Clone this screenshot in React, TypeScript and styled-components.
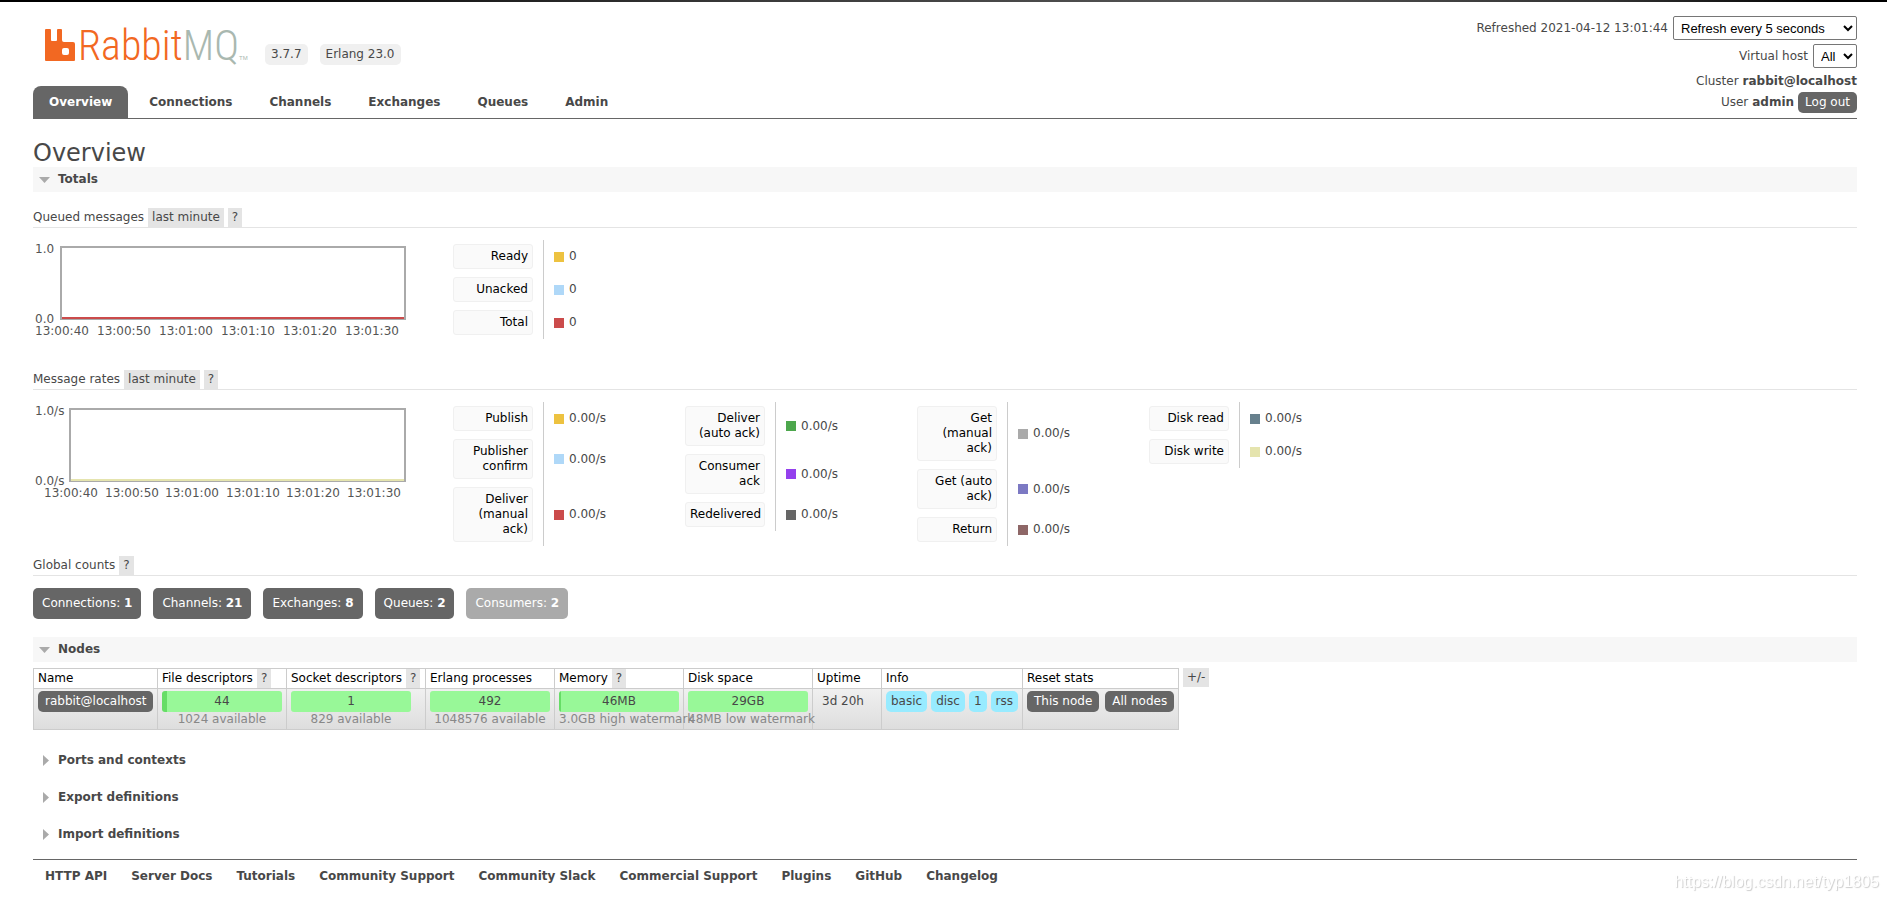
import React, { useState } from "react";
import styled, { createGlobalStyle, css } from "styled-components";

const GlobalStyle = createGlobalStyle`
  * { box-sizing: border-box; }
  body {
    margin: 0;
    background: #fff;
    color: #484848;
    font: 12px/15px Verdana, "DejaVu Sans", sans-serif;
  }
  button, input { font: inherit; }
  a { color: inherit; text-decoration: none; }
`;

const TopEdge = styled.div`
  height: 2px;
  background: linear-gradient(to right, #000 10%, #3a3a3a 40%, #555 65%, #333 85%, #000 97%);
`;

const Page = styled.div`
  padding: 0 30px 0 33px;
`;

const Header = styled.header`
  display: flex;
  justify-content: space-between;
  border-bottom: 1px solid #666;
`;

const Brand = styled.div`
  display: flex;
  flex-direction: column;
  justify-content: space-between;
  padding-top: 26px;
`;

const LogoRow = styled.div`
  display: flex;
  align-items: flex-start;
  gap: 12px;
  padding-left: 12px;
`;

const LogoLink = styled.a`
  display: block;
  width: 208px;
  height: 36px;
  svg { display: block; overflow: visible; }
`;

const VersionTag = styled.span`
  margin-top: 16px;
  padding: 3px 6px;
  border-radius: 5px;
  background: #f0f0f0;
`;

const TabList = styled.ul`
  display: flex;
  gap: 5px;
  margin: 0;
  padding: 0;
  list-style: none;
`;

const Tab = styled.a<{ $active?: boolean }>`
  display: block;
  padding: 9px 16px 8px;
  border-radius: 8px 8px 0 0;
  font-weight: bold;
  ${(p) => p.$active && css`background: #666; color: #fff;`}
`;

const Session = styled.div`
  display: flex;
  flex-direction: column;
  align-items: flex-end;
  padding: 14px 0 3px;
`;

const SessionRow = styled.div<{ $height: number }>`
  display: flex;
  align-items: center;
  gap: 4px;
  height: ${(p) => p.$height}px;
  label { display: flex; align-items: center; gap: 5px; }
`;

const Select = styled.select<{ $width: number }>`
  width: ${(p) => p.$width}px;
  height: 24px;
  padding: 0 3px;
  border: 1px solid #767676;
  border-radius: 2px;
  background-color: #fff;
  color: #000;
  font: 13px Arial, "Liberation Sans", sans-serif;
`;

const DarkButton = styled.button`
  height: 21px;
  padding: 0 7px;
  border: 0;
  border-radius: 5px;
  background: #666;
  color: #fff;
  line-height: 21px;
  white-space: nowrap;
`;

const Title = styled.h1`
  margin: 0;
  padding-top: 20px;
  font-size: 24px;
  font-weight: normal;
  line-height: 28px;
`;

const Section = styled.section<{ $space?: number }>`
  margin-bottom: ${(p) => p.$space ?? 12}px;
`;

const SectionHeading = styled.h2<{ $open: boolean }>`
  margin: 0;
  background: ${(p) => (p.$open ? "#f7f7f7" : "transparent")};
  font-size: 12px;
`;

const SectionToggle = styled.button`
  display: flex;
  align-items: center;
  width: 100%;
  height: 25px;
  padding: 0;
  border: 0;
  background: none;
  color: inherit;
  font-weight: bold;
  text-align: left;
  svg { flex: none; width: 25px; height: 12px; }
`;

const SubHeading = styled.h3`
  display: flex;
  gap: 4px;
  margin: 0;
  border-bottom: 1px solid #e4e4e4;
  font-size: 12px;
  font-weight: normal;
  line-height: 19px;
`;

const Chip = styled.button`
  height: 19px;
  padding: 0 4px;
  border: 0;
  background: #e4e4e4;
  color: #484848;
  line-height: 19px;
`;

const TotalsBody = styled.div`
  padding-top: 16px;
`;

const ChartRow = styled.div`
  display: flex;
  gap: 40px;
  padding: 12px 0 10px;
`;

const Chart = styled.svg`
  flex: none;
  width: 380px;
  height: 120px;
  font-size: 12px;
  fill: #545454;
`;

const Legends = styled.div`
  display: flex;
  align-items: flex-start;
`;

const Legend = styled.table`
  width: 232px;
  border-spacing: 0;
  th, td { padding: 4px 0; vertical-align: middle; text-align: left; }
  th { width: 91px; padding-right: 10px; border-right: 1px solid #ccc; font-weight: normal; }
  td { padding-left: 10px; }
`;

const LegendLabel = styled.button`
  display: block;
  width: 80px;
  padding: 4px;
  border: 1px solid #f0f0f0;
  border-radius: 3px;
  background: #fafafa;
  color: #000;
  text-align: right;
`;

const LegendValue = styled.span<{ $color: string }>`
  display: flex;
  align-items: center;
  gap: 5px;
  &::before { content: ""; width: 10px; height: 10px; background: ${(p) => p.$color}; }
`;

const Counts = styled.div`
  display: flex;
  gap: 12px;
  padding-top: 12px;
`;

const Count = styled.a<{ $muted?: boolean }>`
  padding: 8px 9px;
  border-radius: 5px;
  background: ${(p) => (p.$muted ? "#aaa" : "#666")};
  color: #fff;
`;

const NodesRow = styled.div`
  display: flex;
  align-items: flex-start;
  gap: 4px;
  padding-top: 6px;
`;

const NodeTable = styled.table`
  width: 1146px;
  table-layout: fixed;
  border-collapse: collapse;
  th, td { border: 1px solid #ccc; text-align: left; vertical-align: top; white-space: nowrap; }
  th { padding: 0 4px; color: #000; font-weight: normal; line-height: 19px; }
  td { padding: 2px 4px; height: 41px; }
  tbody tr { background: linear-gradient(#f0f0f0, #ddd); }
`;

const HeadCell = styled.div`
  display: flex;
  gap: 4px;
`;

const Meter = styled.div<{ $used: number }>`
  width: 120px;
  border-radius: 3px;
  background: linear-gradient(#66dd66, #66dd66) 0 0 / ${(p) => p.$used}px 100% no-repeat #98f898;
  line-height: 21px;
  text-align: center;
`;

const MeterNote = styled.div`
  width: 120px;
  color: #888;
  text-align: center;
`;

const PlainCell = styled.div`
  padding-left: 5px;
  line-height: 21px;
`;

const CellItems = styled.div<{ $gap: number }>`
  display: flex;
  gap: ${(p) => p.$gap}px;
`;

const InfoTag = styled.abbr`
  padding: 0 5px;
  border-radius: 5px;
  background: #98ebff;
  line-height: 21px;
  text-decoration: none;
`;

const Footer = styled.footer`
  margin-top: 12px;
  border-top: 1px solid #666;
  ul {
    display: flex;
    flex-wrap: wrap;
    gap: 24px;
    margin: 0;
    padding: 9px 12px;
    list-style: none;
    font-weight: bold;
  }
`;

const Watermark = styled.div`
  position: fixed;
  right: 8px;
  bottom: 8px;
  color: #fff;
  font: 16px/20px "Liberation Sans", Arial, sans-serif;
  text-shadow: 1px 1px 1px #ccc;
`;

function Logo() {
  return (
    <svg width="208" height="36" role="img" aria-label="RabbitMQ">
      <path
        fill="#f26822"
        fillRule="evenodd"
        d="M1 1H5Q6 1 6 2V12Q6 13 7 13H11Q12 13 12 12V2Q12 1 13 1H16Q17 1 17 2V12Q17 14 19 14H28Q30 14 30 16V32Q30 33 29 33H1Q0 33 0 32V2Q0 1 1 1ZM19 20Q17 20 17 22V25Q17 27 19 27H22Q24 27 24 25V22Q24 20 22 20Z"
      />
      <text x="33" y="32" fontSize="42" fontWeight="300" fontFamily="'Liberation Sans Narrow', 'Roboto Condensed', Roboto, sans-serif" fill="#f26822">
        Rabbit<tspan fill="#a9b8b0">MQ</tspan>
      </text>
      <text x="194" y="32" fontSize="6" fontFamily="'Liberation Sans', Arial, sans-serif" fill="#a9b8b0">TM</text>
    </svg>
  );
}

function CollapsibleSection({ title, initiallyOpen, space, children }: {
  title: string; initiallyOpen?: boolean; space?: number; children?: React.ReactNode;
}) {
  const [open, setOpen] = useState(!!initiallyOpen);
  return (
    <Section $space={space}>
      <SectionHeading $open={open}>
        <SectionToggle aria-expanded={open} onClick={() => setOpen(!open)}>
          <svg viewBox="0 0 25 12" fill="#aaa" aria-hidden="true">
            <path d={open ? "M6 3H17L11.5 9Z" : "M10 0V11L16 5.5Z"} />
          </svg>
          {title}
        </SectionToggle>
      </SectionHeading>
      {open && children}
    </Section>
  );
}

const times = ["13:00:40", "13:00:50", "13:01:00", "13:01:10", "13:01:20", "13:01:30"];

function FlatChart({ unit, left, firstTick, step, color, label }: {
  unit: string; left: number; firstTick: number; step: number; color: string; label: string;
}) {
  return (
    <Chart role="img" aria-label={label}>
      <rect x={left + 1} y="7" width={371 - left} height="72" fill="#fff" stroke="#aaa" strokeWidth="2" />
      <rect x={left + 2} y="77" width={369 - left} height="2" fill={color} />
      <text x="2" y="13">1.0{unit}</text>
      <text x="2" y="83">0.0{unit}</text>
      {times.map((t, i) => (
        <text key={t} x={Math.round(firstTick + i * step)} y="95">{t}</text>
      ))}
    </Chart>
  );
}

type Entry = [label: string, color: string];

const queued: Entry[][] = [[["Ready", "#edc240"], ["Unacked", "#afd8f8"], ["Total", "#cb4b4b"]]];

const rates: Entry[][] = [
  [["Publish", "#edc240"], ["Publisher confirm", "#afd8f8"], ["Deliver (manual ack)", "#cb4b4b"]],
  [["Deliver (auto ack)", "#4da74d"], ["Consumer ack", "#9440ed"], ["Redelivered", "#666"]],
  [["Get (manual ack)", "#aaa"], ["Get (auto ack)", "#7c79c3"], ["Return", "#8e6767"]],
  [["Disk read", "#67808d"], ["Disk write", "#e5e4ae"]],
];

function LegendGroup({ columns, value }: { columns: Entry[][]; value: string }) {
  return (
    <Legends>
      {columns.map((entries, i) => (
        <Legend key={i}>
          <tbody>
            {entries.map(([label, color]) => (
              <tr key={label}>
                <th scope="row"><LegendLabel>{label}</LegendLabel></th>
                <td><LegendValue $color={color}>{value}</LegendValue></td>
              </tr>
            ))}
          </tbody>
        </Legend>
      ))}
    </Legends>
  );
}

const tabs = ["Overview", "Connections", "Channels", "Exchanges", "Queues", "Admin"];

const counts: [string, number][] = [["Connections", 1], ["Channels", 21], ["Exchanges", 8], ["Queues", 2], ["Consumers", 2]];

const nodeColumns: { name: string; width: number; help?: boolean }[] = [
  { name: "Name", width: 124 },
  { name: "File descriptors", width: 129, help: true },
  { name: "Socket descriptors", width: 139, help: true },
  { name: "Erlang processes", width: 129 },
  { name: "Memory", width: 129, help: true },
  { name: "Disk space", width: 129 },
  { name: "Uptime", width: 69 },
  { name: "Info", width: 141 },
  { name: "Reset stats", width: 156 },
];

const meters: [value: string, note: string, used: number][] = [
  ["44", "1024 available", 5],
  ["1", "829 available", 0],
  ["492", "1048576 available", 0],
  ["46MB", "3.0GB high watermark", 2],
  ["29GB", "48MB low watermark", 0],
];

const footerLinks = [
  "HTTP API", "Server Docs", "Tutorials", "Community Support", "Community Slack",
  "Commercial Support", "Plugins", "GitHub", "Changelog",
];

export default function App() {
  return (
    <>
      <GlobalStyle />
      <TopEdge />
      <Page>
        <Header>
          <Brand>
            <LogoRow>
              <LogoLink href="#/"><Logo /></LogoLink>
              <VersionTag>3.7.7</VersionTag>
              <VersionTag>Erlang 23.0</VersionTag>
            </LogoRow>
            <nav>
              <TabList>
                {tabs.map((t, i) => (
                  <li key={t}><Tab href={`#/${t.toLowerCase()}`} $active={i === 0}>{t}</Tab></li>
                ))}
              </TabList>
            </nav>
          </Brand>
          <Session>
            <SessionRow $height={24}>
              <label>
                Refreshed 2021-04-12 13:01:44
                <Select $width={184}><option>Refresh every 5 seconds</option></Select>
              </label>
            </SessionRow>
            <SessionRow $height={32}>
              <label>
                Virtual host
                <Select $width={44}><option>All</option></Select>
              </label>
            </SessionRow>
            <SessionRow $height={18}>Cluster <b>rabbit@localhost</b></SessionRow>
            <SessionRow $height={25}>User <b>admin</b> <DarkButton>Log out</DarkButton></SessionRow>
          </Session>
        </Header>
        <main>
          <Title>Overview</Title>
          <CollapsibleSection title="Totals" initiallyOpen space={18}>
            <TotalsBody>
              <SubHeading>Queued messages <Chip>last minute</Chip><Chip>?</Chip></SubHeading>
              <ChartRow>
                <FlatChart label="Queued messages" unit="" left={27} firstTick={2} step={62} color="#cb4b4b" />
                <LegendGroup columns={queued} value="0" />
              </ChartRow>
              <SubHeading>Message rates <Chip>last minute</Chip><Chip>?</Chip></SubHeading>
              <ChartRow>
                <FlatChart label="Message rates" unit="/s" left={36} firstTick={11} step={60.5} color="#e5e4ae" />
                <LegendGroup columns={rates} value="0.00/s" />
              </ChartRow>
              <SubHeading>Global counts <Chip>?</Chip></SubHeading>
              <Counts>
                {counts.map(([name, n]) => (
                  <Count key={name} href={`#/${name.toLowerCase()}`} $muted={name === "Consumers"}>
                    {name}: <b>{n}</b>
                  </Count>
                ))}
              </Counts>
            </TotalsBody>
          </CollapsibleSection>
          <CollapsibleSection title="Nodes" initiallyOpen space={18}>
            <NodesRow>
              <NodeTable>
                <colgroup>{nodeColumns.map((c) => <col key={c.name} width={c.width} />)}</colgroup>
                <thead>
                  <tr>
                    {nodeColumns.map((c) => (
                      <th key={c.name} scope="col"><HeadCell>{c.name}{c.help && <Chip>?</Chip>}</HeadCell></th>
                    ))}
                  </tr>
                </thead>
                <tbody>
                  <tr>
                    <td><DarkButton>rabbit@localhost</DarkButton></td>
                    {meters.map(([value, note, used]) => (
                      <td key={note}><Meter $used={used}>{value}</Meter><MeterNote>{note}</MeterNote></td>
                    ))}
                    <td><PlainCell>3d 20h</PlainCell></td>
                    <td>
                      <CellItems $gap={4}>
                        {["basic", "disc", "1", "rss"].map((t) => <InfoTag key={t}>{t}</InfoTag>)}
                      </CellItems>
                    </td>
                    <td>
                      <CellItems $gap={6}>
                        <DarkButton>This node</DarkButton>
                        <DarkButton>All nodes</DarkButton>
                      </CellItems>
                    </td>
                  </tr>
                </tbody>
              </NodeTable>
              <Chip>+/-</Chip>
            </NodesRow>
          </CollapsibleSection>
          <CollapsibleSection title="Ports and contexts" />
          <CollapsibleSection title="Export definitions" />
          <CollapsibleSection title="Import definitions" />
        </main>
        <Footer>
          <ul>
            {footerLinks.map((l) => <li key={l}><a href="#/">{l}</a></li>)}
          </ul>
        </Footer>
      </Page>
      <Watermark>https://blog.csdn.net/typ1805</Watermark>
    </>
  );
}
